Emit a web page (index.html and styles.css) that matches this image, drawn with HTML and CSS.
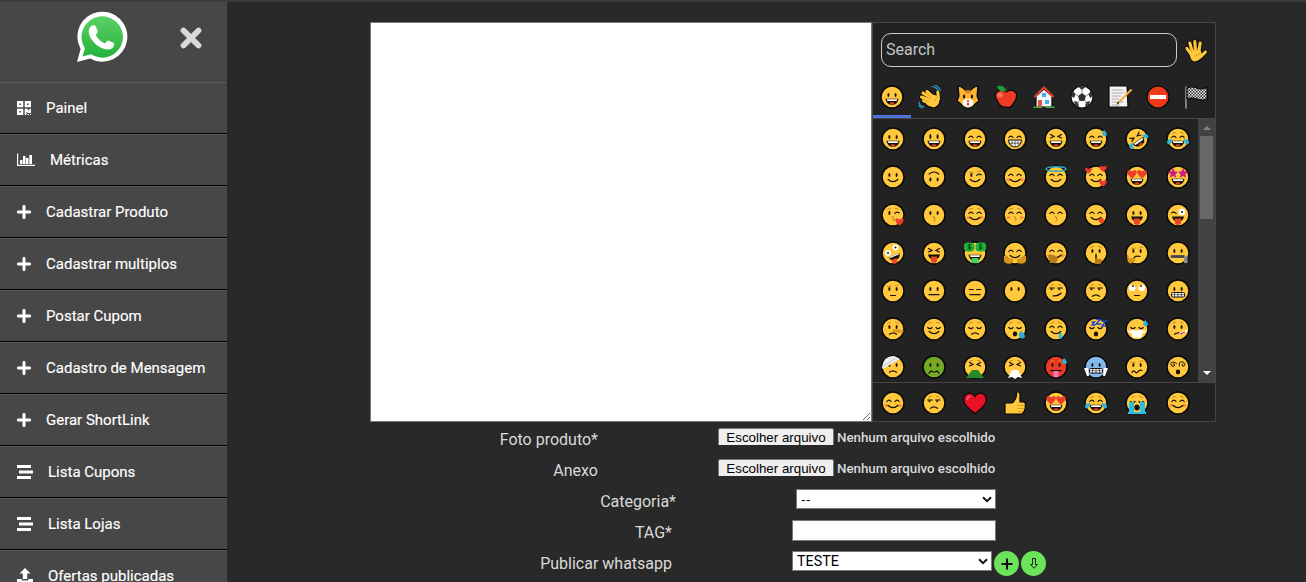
FILE: index.html
```html
<!DOCTYPE html>
<html lang="pt-BR">
<head>
<meta charset="utf-8">
<title>Cadastro de Mensagem</title>
<link rel="stylesheet" href="styles.css">
</head>
<body>
<div class="app">
  <aside class="sidebar">
    <header class="brand">
      <svg class="logo" width="52" height="52" viewBox="0 0 52 52">
        <defs><linearGradient id="green" x1="0" y1="0" x2="0" y2="1"><stop offset="0" stop-color="#5bd066"/><stop offset="1" stop-color="#25b33b"/></linearGradient></defs>
        <path fill="#fff" d="M1 51 4.600 38A25 25 0 1 1 14 47.400Z"/>
        <path fill="url(#green)" d="M6.500 45.500 8.900 37.300A20.700 20.700 0 1 1 14.900 43.300Z"/>
        <path fill="#fff" d="M14.500 15.800c1.200-1.700 4.500-1.900 5.200-.6l2 5c.5 1.400-1.400 3-1.900 3.800 1.900 4 5 6.700 9.300 8.400 1.100-1 2-3.200 3.200-2.900l5.400 2.600c1.200.8.200 4-1.500 5.200-2.600 1.700-5.700 1.600-9.400.1C20.600 34.700 16.700 30.700 14 25.700c-1.900-4.300-1.700-7.500.5-9.900Z"/>
      </svg>
      <svg class="close" width="24" height="24" viewBox="0 0 24 24"><path d="m4.500 4.500 15 15m0-15-15 15" stroke="#d9d9d9" stroke-width="5.800" stroke-linecap="round"/></svg>
    </header>
    <nav>
      <a class="item"><svg width="14" height="14" viewBox="0 0 14 14"><path fill="#fff" fill-rule="evenodd" d="M0 0h6.300v6.300H0zM2.400 2.400v1.500h1.500V2.400zM7.700 0H14v6.300H7.700zM10.100 2.400v1.500h1.500V2.400zM0 7.700h6.300V14H0zM2.400 10.100v1.500h1.500v-1.500zM7.700 7.700h3.200v1.500h1.500V7.700H14v4.200h-3.600v-.8H9.500V14H7.700zM10.500 13H12v1h-1.500zM13 13h1v1h-1z"/></svg><span>Painel</span></a>
      <a class="item"><svg width="18" height="14" viewBox="0 0 18 14"><path fill="#fff" d="M0 .5h1.200v11.300H18V13H0zM3 7h2.500v4H3zM6 3h2.500v8H6zM9 5h2.500v6H9zM12.300 2H15v9h-2.700z"/></svg><span>Métricas</span></a>
      <a class="item"><svg width="14" height="14" viewBox="0 0 14 14"><path d="M7 1.400v11.200M1.400 7h11.200" stroke="#fff" stroke-width="3" stroke-linecap="round"/></svg><span>Cadastrar Produto</span></a>
      <a class="item"><svg width="14" height="14" viewBox="0 0 14 14"><path d="M7 1.400v11.200M1.400 7h11.200" stroke="#fff" stroke-width="3" stroke-linecap="round"/></svg><span>Cadastrar multiplos</span></a>
      <a class="item"><svg width="14" height="14" viewBox="0 0 14 14"><path d="M7 1.400v11.200M1.400 7h11.200" stroke="#fff" stroke-width="3" stroke-linecap="round"/></svg><span>Postar Cupom</span></a>
      <a class="item"><svg width="14" height="14" viewBox="0 0 14 14"><path d="M7 1.400v11.200M1.400 7h11.200" stroke="#fff" stroke-width="3" stroke-linecap="round"/></svg><span>Cadastro de Mensagem</span></a>
      <a class="item"><svg width="14" height="14" viewBox="0 0 14 14"><path d="M7 1.400v11.200M1.400 7h11.200" stroke="#fff" stroke-width="3" stroke-linecap="round"/></svg><span>Gerar ShortLink</span></a>
      <a class="item"><svg width="16" height="14" viewBox="0 0 16 14"><path fill="#fff" d="M0 0h14v3H0zM2 5.500h14v3H2zM0 11h14v3H0z"/></svg><span>Lista Cupons</span></a>
      <a class="item"><svg width="16" height="14" viewBox="0 0 16 14"><path fill="#fff" d="M0 0h14v3H0zM2 5.500h14v3H2zM0 11h14v3H0z"/></svg><span>Lista Lojas</span></a>
      <a class="item"><svg width="16" height="16" viewBox="0 0 16 16"><path fill="#fff" d="m8 0 5.500 5.500h-3.300V11H5.800V5.500H2.500zM0 11h4.800v1.500h6.400V11H16v5H0z"/></svg><span>Ofertas publicadas</span></a>
    </nav>
  </aside>
  <main class="content">
    <section class="composer">
      <textarea class="message"></textarea>
      <div class="picker">
        <div class="search-row"><input class="search" placeholder="Search"><span class="emoji" data-e="hand"></span></div>
        <div class="tabs" id="tabs"></div>
        <div class="browse">
          <div class="grid" id="grid"></div>
          <div class="scrollbar"><i class="up"></i><i class="thumb"></i><i class="down"></i></div>
        </div>
        <div class="favorites" id="favorites"></div>
      </div>
    </section>
    <form class="fields">
      <div class="row"><label class="l-file">Foto produto*</label><div class="file f-file"><span class="file-btn">Escolher arquivo</span><span class="file-name">Nenhum arquivo escolhido</span></div></div>
      <div class="row"><label class="l-file">Anexo</label><div class="file f-file"><span class="file-btn">Escolher arquivo</span><span class="file-name">Nenhum arquivo escolhido</span></div></div>
      <div class="row"><label class="l-cat">Categoria*</label><div class="select f-cat"><select class="blank"><option>--</option></select><svg width="10" height="7" viewBox="0 0 10 7"><path d="m1 1.200 4 4 4-4" fill="none" stroke="#111" stroke-width="2"/></svg></div></div>
      <div class="row"><label class="l-tag">TAG*</label><input class="tag f-tag"></div>
      <div class="row"><label class="l-tag">Publicar whatsapp</label><div class="select f-tag"><select><option>TESTE</option></select><svg width="10" height="7" viewBox="0 0 10 7"><path d="m1 1.200 4 4 4-4" fill="none" stroke="#111" stroke-width="2"/></svg></div>
        <span class="round"><svg width="12" height="12" viewBox="0 0 12 12"><path d="M6 .5v11M.5 6h11" stroke="#111" stroke-width="2"/></svg></span>
        <span class="round"><svg width="8" height="11" viewBox="0 0 8 11"><path d="M2.500.5h3v6h1.800L4 10.300.7 6.500h1.800z" fill="none" stroke="#111" stroke-width=".9"/></svg></span></div>
    </form>
  </main>
</div>
<script src="emoji.js"></script>
</body>
</html>
```

FILE: styles.css
```css
* { box-sizing: border-box; }
body { margin: 0; height: 582px; overflow: hidden; background: #292929; color: #d9d9d9; font-family: Roboto, sans-serif; }
.app { display: flex; height: 582px; border-top: 2px solid #3b3b3b; overflow: hidden; }
.sidebar { width: 227px; flex: none; background: #474747; }
.brand { height: 80px; display: flex; align-items: flex-start; padding: 9px 0 0 76px; }
.close { margin: 15px 0 0 51px; }
.item { display: flex; align-items: center; height: 52px; padding-left: 17px; border-top: 1px solid #5a5a5a; border-bottom: 1px solid #000; background: #474747; color: #fff; font-size: 15px; -webkit-text-stroke: .15px #fff; }
.item span { margin-left: 15px; white-space: nowrap; }
.item svg { flex: none; }
.content { flex: 1; padding: 20px 0 0 143px; }
.composer { display: flex; height: 400px; }
.message { width: 502px; height: 400px; margin: 0; border: 1px solid #767676; background: #fff; resize: both; }
.picker { width: 344px; height: 400px; border: 1px solid #464646; background: #222; display: flex; flex-direction: column; }
.search-row { display: flex; align-items: flex-start; height: 56px; padding: 10px 0 0 8px; gap: 7px; }
.search-row .emoji { margin-top: 6px; }
.search { width: 296px; height: 34px; padding: 0 4px 1px; border: 1px solid #ccc; border-radius: 10px; background: #222; color: #ccc; font: 16px Roboto, sans-serif; }
.search::placeholder { color: #c4c4c4; opacity: 1; }
.emoji { display: flex; align-items: center; justify-content: center; }
.tabs { display: flex; height: 40px; border-bottom: 1px solid #464646; }
.tabs .emoji { width: 38px; height: 39px; border-bottom: 3px solid transparent; }
.tabs .emoji:first-child { border-bottom-color: #4f72dc; }
.browse { display: flex; height: 263px; overflow: hidden; }
.grid { width: 325px; display: grid; grid-template-columns: repeat(8, 1fr); grid-auto-rows: 38px; padding-top: 1px; }
.scrollbar { width: 17px; height: 263px; background: #424242; display: flex; flex-direction: column; align-items: center; }
.up, .down { border: 4px solid transparent; }
.up { border-bottom-color: #858585; margin: 3px 0 6px; }
.down { border-top-color: #fff; margin-top: auto; margin-bottom: 3px; }
.thumb { width: 13px; height: 83px; background: #686868; }
.favorites { width: 342px; height: 39px; border-top: 1px solid #464646; display: grid; grid-template-columns: repeat(8, 1fr); padding: 1px 17px 0 0; }
.row { display: flex; height: 31px; align-items: flex-start; }
.row label { padding-top: 8px; font-size: 16px; line-height: 19px; text-align: right; white-space: nowrap; }
.l-file { width: 228px; }
.l-cat { width: 306px; }
.l-tag { width: 302px; }
.f-file { margin: 6px 0 0 120px; }
.f-cat { margin: 5px 0 0 120px; }
.f-tag { margin: 5px 0 0 120px; }
.file { display: flex; height: 17px; overflow: hidden; font-size: 13.33px; line-height: 19px; white-space: nowrap; }
.file-btn { width: 116px; height: 22px; border: 1px solid #767676; border-radius: 2px; background: #efefef; color: #000; text-align: center; font-family: "Liberation Sans", sans-serif; line-height: 18px; }
.file-name { margin-left: 3px; font-weight: 500; letter-spacing: -.03px; }
.select { display: grid; width: 200px; height: 20px; }
.select > * { grid-area: 1 / 1; }
.select select { appearance: none; width: 200px; height: 20px; padding: 0 4px; border: 1px solid #767676; border-radius: 0; background: #fff; color: #000; font: 14.300px Roboto, sans-serif; }
.select .blank { font: 13.33px "Liberation Sans", sans-serif; letter-spacing: .5px; }
.select svg { justify-self: end; align-self: center; margin-right: 4px; pointer-events: none; }
.tag { width: 204px; height: 21px; padding: 1px; border: 1px solid #767676; background: #fff; }
.round { display: flex; align-items: center; justify-content: center; width: 25px; height: 25px; margin: 5px 0 0 2px; border-radius: 50%; background: #6be35a; }
```

FILE: emoji.js
```js
const K = '#17110a';
const line = (d, w = 1, c = K) => `<path d="${d}" fill="none" stroke="${c}" stroke-width="${w}" stroke-linecap="round"/>`;
const fill = (d, c, extra = '') => `<path d="${d}" fill="${c}" ${extra}/>`;
const dot = (x, y, rx, ry, c = K) => `<ellipse cx="${x}" cy="${y}" rx="${rx}" ry="${ry}" fill="${c}"/>`;
const heart = (x, y, s) => `<path transform="translate(${x} ${y}) scale(${s})" fill="#ee3b2b" d="M0 4C-7-1-4-5 0-2 4-5 7-1 0 4Z"/>`;
const star = (x) => `<path transform="translate(${x} 8)" fill="#cf1b84" d="m0-5 1.400 3.300L5-1.200 2.400 1.200l.8 3.600L0 3-3.200 4.800l.8-3.600L-5-1.200l3.600-.5Z"/>`;
const brows = line('M6.500 6.600Q8 5 9.500 5.300M14.500 5.300Q16 5 17.500 6.600', 1, '#c98a1c');
const cheeks = dot(5.500, 14.500, 2, 1.600, '#f6893f') + dot(18.500, 14.500, 2, 1.600, '#f6893f');
const drop = (x, y) => fill(`M${x} ${y}q-3 4-1 5.500q3 1.500 4-1q0-2-3-4.500Z`, '#2fb4dc');

const part = {
  dot: dot(8.400, 10, 1, 1.900) + dot(15.600, 10, 1, 1.900),
  tall: dot(8.400, 9.500, 1, 2.600) + dot(15.600, 9.500, 1, 2.600),
  low: dot(8.400, 14.500, 1, 1.900) + dot(15.600, 14.500, 1, 1.900),
  arc: line('M5.800 10.500Q8 7.600 10 10.500M14 10.500Q16 7.600 18.200 10.500', 1.200),
  squint: line('M6.500 7.500 10 9.500 6.500 11M17.500 7.500 14 9.500 17.500 11', 1.200),
  wink: dot(8.400, 10, 1, 1.900) + line('M13.800 10.300Q16 8 18.200 9.800', 1.200),
  winkLeft: line('M5.800 9.800Q8 8 10.200 10.300', 1.200),
  closed: line('M5.800 10.500Q8 12.800 10 10.500M14 10.500Q16 12.800 18.200 10.500', 1.200),
  dash: line('M6.300 10.500h4M13.700 10.500h4', 1.200),
  side: line('M5.700 9h4.800M13.500 9h4.800', 1) + dot(7.500, 10.200, 1, 1) + dot(15.200, 10.200, 1, 1),
  smile: line('M7.200 14.500Q12 18.800 16.800 14.500', 1.300),
  open: fill('M5.500 13.700h13q-.8 6-6.500 6t-6.500-6Z', K) + fill('M6.700 14.200h10.600l-.7 1.800H7.400Z', '#fff') + dot(12, 18.300, 2.400, 1, '#e8401f'),
  teeth: fill('M5.500 13h13q-.8 7-6.500 7t-6.500-7Z', '#fff', `stroke="${K}"`) + line('M6 16.200h12M9 14v5M12 14v5.500M15 14v5', .6),
  box: '<rect x="5.500" y="13.500" width="13" height="4.500" rx="1" fill="#fff" stroke="#17110a"/>' + line('M6 15.700h12M8.500 14v4M12 14v4M15.500 14v4', .6),
  flat: line('M7 15.700h10', 1.300),
  short: line('M9.500 16.500h5', 1.200),
  frown: line('M8.500 17.200Q12 14.500 15.500 17.200', 1.300),
  o: dot(12, 17, 2.200, 2.400),
  smirk: line('M9 16.800Q14 17.500 17 14.300', 1.300),
  kiss: line('M11 13.500q3 .4 1 2q3 .8 0 2.600', .9, '#b97a1a'),
  tongue: fill('M6 13.500h12q-1 5-6 5t-6-5Z', K) + fill('M9 15.500h6v5q-3 3-6 0Z', '#ee4529'),
  wavy: line('M7 17.500q1.500-3 3-.8t3 0 4-1.200', 1.200),
  grim: line('M7 18l2-2 2 1h2l2-1 2 2', 1.200),
  brows, cheeks,
  brow1: line('M6.200 7.300h4', 1, '#c98a1c') + line('M14 7Q15.500 5 17.800 6.200', 1, '#c98a1c'),
  flip: line('M7.200 9Q12 5 16.800 9', 1.200),
  sweat: drop(20, 3),
  tearsJoy: fill('M1 15q0-3 5-3-.5 5-3 5.500-2 0-2-2.500ZM23 15q0-3-5-3 .5 5 3 5.500 2 0 2-2.500Z', '#2fb4dc'),
  halo: '<ellipse cx="12" cy="4" rx="10" ry="2.300" fill="none" stroke="#29a9c9" stroke-width="1.500"/>',
  hearts3: heart(4.500, 5.500, .8) + heart(19, 3.500, .85) + heart(19, 18, .9),
  heartEyes: heart(7, 8.800, 1.150) + heart(17, 8.800, 1.150),
  stars: star(7) + star(17),
  heartKiss: heart(18.500, 18.500, 1),
  lick: fill('M14 16.500q3-2 5-1.500 2 4-.5 5.500-2.500.5-4.500-4Z', '#ee4529'),
  bigEye: dot(16, 9, 3.300, 3.300, '#fff') + dot(16, 9, 1, 1),
  crazy: dot(7, 12, 3, 3, '#fff') + dot(14.500, 6.500, 3, 3, '#fff') + dot(7, 12, 1, 1) + dot(14.500, 6.500, 1, 1) + fill('M7.500 16.500 18.500 12q1 5-3.500 7t-7.500-2.500Z', K) + line('M9 16.500 17.500 13', 1.200, '#fff') + fill('m10.500 19 5-2 1 4q-2 3-5 1Z', '#ee4529'),
  money: '<rect x="1" y="1.500" width="10.500" height="9" rx="3.500" fill="#20b43b"/><rect x="12.500" y="1.500" width="10.500" height="9" rx="3.500" fill="#20b43b"/>' + line('M8 4Q5 2.800 5 4.800T8 6.800 5 8M6.500 2.700v6.200M19 4Q16 2.800 16 4.800T19 6.800 16 8M17.500 2.700v6.200', .8, '#07380e') + fill('M9 17h6l1.500 5h-9Z', '#41d16a'),
  hug: fill('M1 15q4-1 5 2l4 1v4q-7 2-9-2ZM23 15q-4-1-5 2l-4 1v4q7 2 9-2Z', '#d9951c'),
  coverHand: fill('M4 15q4-3 9 1 2 4-2 6H6Z', '#b97a1a'),
  hush: fill('M11 14h2v4h4q2 3-1 5h-5Z', '#b97a1a') + line('M12 13v4', 1.200),
  chin: line('M9 16.500q3-2 6-1', 1.200) + fill('M2 15q2-1 2 2l6 0q1 4-4 5.500-4 0-4-7.500Z', '#d9951c'),
  zip: line('M6 15.500h12', 3, '#777') + line('M6 15.500h12', 2.400, '#444').replace('/>', ' stroke-dasharray="1 1.500"/>') + fill('M18 15h3.500v7H18Z', '#8b8b8b'),
  roll: dot(7.200, 9, 3.200, 3.200, '#fff') + dot(16.800, 9, 3.200, 3.200, '#fff') + dot(8, 7, .9, .9) + dot(16, 7, .9, .9),
  nose: fill('M12 12.500q5-1 11.500 2l-5 1.500-6.500-1Z', '#d9951c'),
  tear: fill('M18 14q-3 3-2 6 3 3 6 0 0-4-4-6Z', '#2fa7d8'),
  drool: fill('M15 16h2.500l1 4q-1 3-4 1Z', '#36bfd0'),
  zzz: line('M8 5h2.500L8 8h3M12 2.500h4.500L12 7h5M18 4h4l-4 5h4', 1.400, '#1d48c7'),
  mask: fill('M1.500 13.500q5 1 5.500-1 5 2 10 0 .5 2 5.500 1l-5 3-1 4H7.500l-1-4Z', '#fff'),
  thermo: line('m14 17 6-3', 2.500, '#fff') + line('m14 17 4.500-2', 1.200, '#d02b2b'),
  bandage: fill('M1 12Q3 0 14 1.200L19 4 1.500 14Z', '#eee') + line('M1 12 15 3', .8, '#bbb'),
  vomit: fill('M9 15h6l3 4 3 4H3l3-4Z', '#238b28'),
  tissue: fill('M9 15h6l4 8-4-1-3 2-3-2-4 1Z', '#fff'),
  pink: fill('M9.500 16h5v5q-2.500 3-5 0Z', '#ef77b5'),
  icicles: fill('M0 13h4l1 8H3ZM24 13h-4l-1 8h2Z', '#fff'),
  swirl: line('M10.500 8.500Q7 5.500 4.800 8.500 5 12 8.200 11.200 9.500 9 7.200 8.800M13.500 11Q12 6.500 16.500 6.800 20.500 8 18 11 15 11.500 16.500 8.900', 1),
  sob: fill('M4 11h5v12H4ZM15 11h5v12h-5Z', '#2ebce0') + fill('M3 21h18v2H3Z', '#2ebce0') + dot(12, 16.500, 2.700, 3)
};

const face = (spec) => {
  const names = spec.split(' ');
  let color = '#ffc83d';
  let turn = '';
  if (names.includes('sick')) color = '#72a925';
  if (names.includes('hot')) color = '#e83a25';
  if (names.includes('cold')) color = '#83b9ed';
  if (names.includes('rofl')) turn = 'transform="rotate(-35 12 12)"';
  return `<circle cx="12" cy="12" r="11" fill="${color}" stroke="#080808" stroke-width="1.500"/><g ${turn}>${names.map(n => part[n] || '').join('')}</g>`;
};

const outlined = 'stroke="#080808" stroke-width="1.200" stroke-linejoin="round"';
const palmWith = (palm, fingers) => fill(palm, '#080808', 'stroke="#080808" stroke-width="1.800"') + line(fingers, 4.700, '#080808') + fill(palm, '#ffc83d') + line(fingers, 3.100, '#ffc83d');
const things = {
  hand: palmWith('M5.500 13Q11 8 17 12l1 4q-2 6.500-8 6.500-4-1-4.500-9.500Z', 'M7 15 2.800 9.300M8.300 13 5.800 4M11.500 12 10.800 2.600M14.800 13 16.200 4M16.500 18 21.500 13') + line('M11 17q2-2.500 5-2M7.500 12.500 6.800 10M10 11.500V9M13.200 11.500 13.500 9', .7, '#d08a1c'),
  wave: palmWith('M10 9 17 10l4 2q2 7-4 10-5 1-9-3Z', 'M11 18 5.500 15.500M11 15 3.500 12M13 13 5 8M15 12 9 6.500M20.500 14 19.800 7') + line('M14 1.500q5 1 6 4M17 .5q4 1 5.500 5M1 17q0 4 5 5M1 20.500q1 2 3 2.500', 1.100, '#2aa8d3') + line('m6 10.200 6 4M4.500 14 10.500 17M8.500 8.500l5 4M17 16q0-3 3-4', .7, '#c98a1c'),
  cat: fill('M2 1q5 1 7 4h6q2-3 7-4l-1 10 2 5-4 3q-3 4-7 4t-7-4l-4-3 2-5Z', '#ffb534', outlined) + dot(12, 18, 5.500, 4.200, '#fff') + dot(8, 11.500, 1.100, 2) + dot(16, 11.500, 1.100, 2) + dot(12, 16, 1.400, .9, '#ef5031') + dot(12, 19, 1.200, 1.500, '#d84236') + line('M10 5v3M12 4.500V8M14 5v3', 1, '#b26a14'),
  apple: fill('M12 7Q18 3 22 8q2 5-3 11-3 5-7 3-5 1-8-5Q-1 10 3 7q4-3 9 0Z', '#ee3c24', outlined) + fill('M3 1q8-1 9 5Q5 8 3 1Z', '#17a338') + line('M12 7q0-4 2-5', 1, '#5c321c') + dot(6, 10, 2.500, 2.500, '#f57561'),
  house: fill('M4 11v11h16V11l-8-7Z', '#f1f4f8', outlined) + line('M3 11.500 12 2.500 21 11.500', 2, '#e54132') + fill('M6 15h4v7H6Z', '#e95243') + fill('M13 15h4v4h-4ZM10 8h4v4h-4Z', '#41b5e7') + line('M2 22.300h7.500M14 22.300h8', 1.600, '#45ad3b'),
  ball: '<circle cx="12" cy="12" r="11" fill="#fff" stroke="#080808" stroke-width="1.200"/>' + fill('m12 8 4 3-1.500 5h-5L8 11ZM8 1.500h8L12 5ZM1 11l2-5 2.500 3L4 13ZM23 11l-2-5-2.500 3 1.500 4ZM5 20l-1-4 4 1 1 5ZM19 20l1-4-4 1-1 5Z', '#333') + line('M12 8V4M8 11 5 9M16 11l3-2M9 16l-2 3M15 16l2 3', .8, '#777'),
  note: fill('M1 1h18l1 21H1Z', '#f4f4f4', outlined) + line('M4 5h11M4 8h12M4 11h9M4 14h7M4 17h11M4 20h7', .8, '#999') + line('M11 17 23 5', 2, '#f4ae35') + line('m10.500 17.500-1 1', 1.200),
  stop: '<circle cx="12" cy="12" r="11" fill="#ef3b19" stroke="#080808" stroke-width="1.200"/>' + fill('M4 10h16v4H4Z', '#fff'),
  flag: '<defs><pattern id="check" width="3" height="3" patternUnits="userSpaceOnUse"><path fill="#eee" d="M0 0h3v3H0z"/><path fill="#333" d="M0 0h1.500v1.500H0zM1.500 1.500H3V3H1.500z"/></pattern></defs>' + line('M2 2v21', 1.400, '#aaa') + fill('M3 3q5-2 10 0t10-1v12q-5 2-10 0T3 14Z', 'url(#check)', outlined),
  heart: fill('M12 22.500Q0 14 .8 8 1.500 2.500 6.500 2.200q3.500 0 5.500 3.600 2-3.600 5.500-3.600 5 .3 5.700 5.800.8 6-11.200 14.500Z', '#e81224', outlined) + line('M4.500 8.500q0-3 2.500-3', 1.600, '#f5697b'),
  thumb: fill('M2 12h7q5-4 4.500-10.500 3-2 3.500 2V11h3.500q3 1 1.500 4 1 2-.5 4 0 2-1.500 2.500 0 1.500-2 1.500H2Z', '#ffc83d', outlined) + line('M15 14.500h6M15 17.500h5.500M15 20.500h4.500', .8, '#d8931f')
};

const draw = (name) => `<svg width="24" height="24" viewBox="0 0 24 24">${things[name] || face(name)}</svg>`;
const put = (id, list) => {
  document.getElementById(id).innerHTML = list.map(n => `<span class="emoji">${draw(n)}</span>`).join('');
};
document.querySelectorAll('[data-e]').forEach(el => { el.innerHTML = draw(el.dataset.e); });

put('tabs', ['dot open', 'wave', 'cat', 'apple', 'house', 'ball', 'note', 'stop', 'flag']);
put('grid', [
  'dot open', 'tall open', 'arc open', 'arc teeth', 'squint open', 'arc open sweat', 'rofl squint open tearsJoy', 'brows arc open tearsJoy',
  'dot smile', 'low flip', 'brow1 wink smile', 'arc cheeks smile', 'arc smile halo', 'arc smile hearts3', 'open heartEyes', 'open stars',
  'brows wink kiss heartKiss', 'dot kiss', 'brows cheeks arc smile', 'brows cheeks arc kiss', 'arc kiss', 'arc smile lick', 'dot tongue', 'winkLeft bigEye tongue',
  'crazy', 'squint tongue', 'open money', 'arc smile hug', 'arc cheeks smirk coverHand', 'brows dot hush', 'brow1 dot chin', 'dot zip',
  'brow1 dot short', 'dot flat', 'dash flat', 'dot', 'brows side smirk', 'brows side frown', 'roll short', 'dot box',
  'brows dot frown nose', 'brows closed smile', 'brows closed frown', 'brows closed o tear', 'brows arc smile drool', 'closed o zzz', 'closed mask sweat', 'brows dot frown thermo',
  'dot frown bandage', 'sick brows dot grim', 'brows squint vomit', 'brows squint tissue', 'hot brows dot flat pink sweat', 'cold dot box icicles', 'brow1 dot wavy', 'swirl o'
]);
put('favorites', ['arc cheeks smile', 'brows side frown', 'heart', 'thumb', 'open heartEyes', 'brows arc open tearsJoy', 'brows closed sob', 'brows arc cheeks smile']);
```
